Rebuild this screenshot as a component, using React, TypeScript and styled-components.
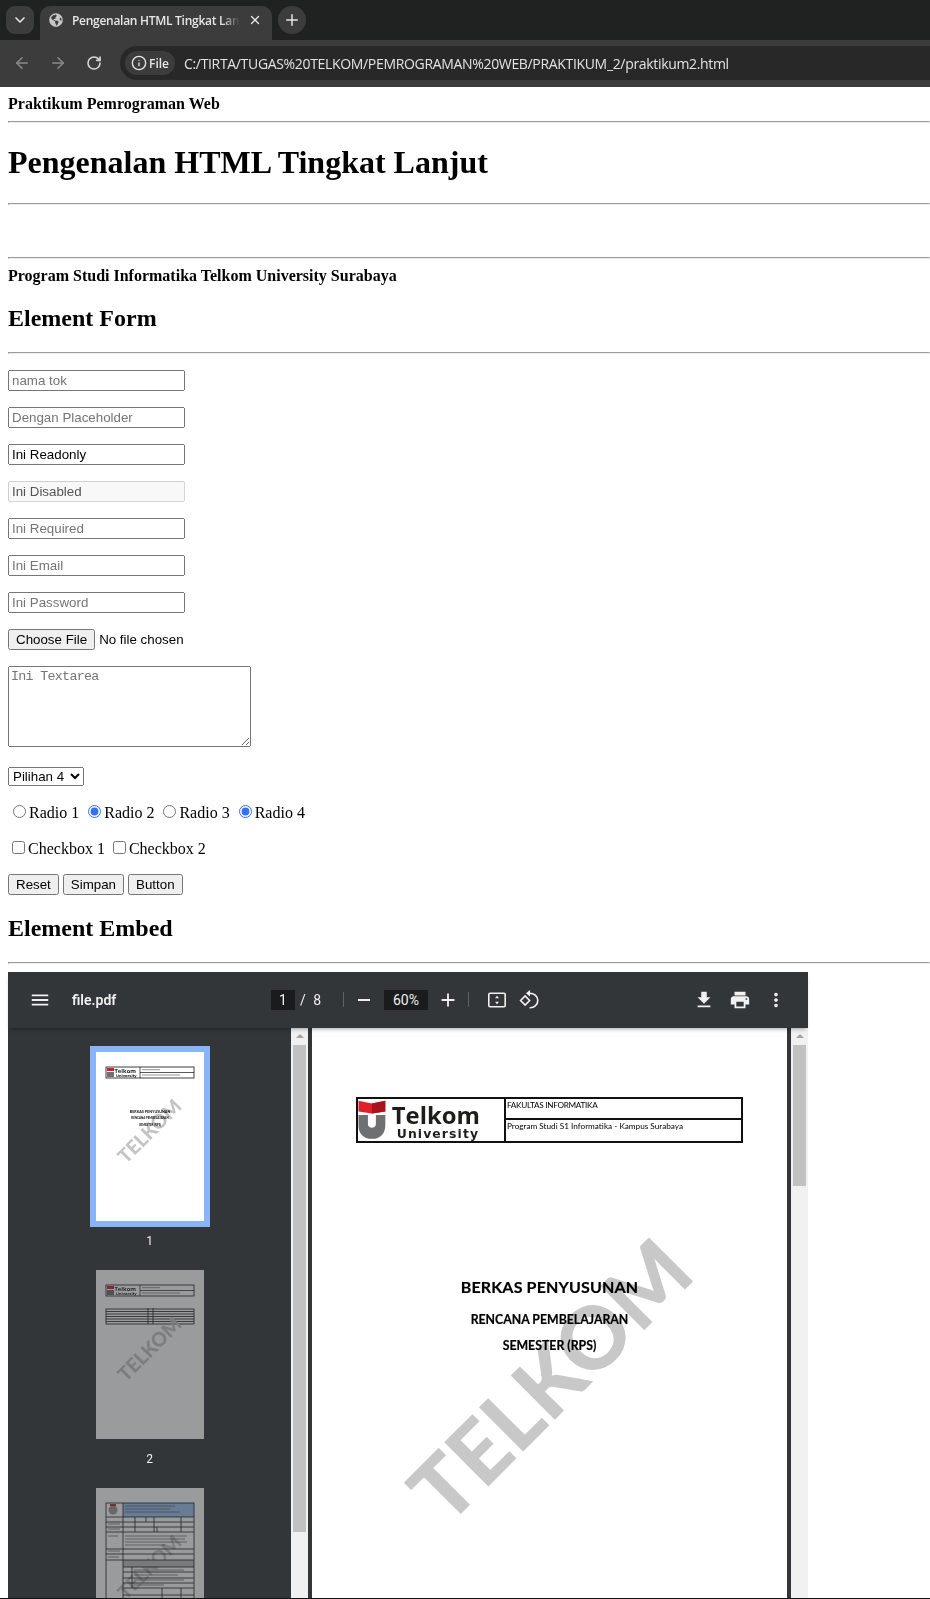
import React from 'react'
import styled, { createGlobalStyle } from 'styled-components'
import { ArrowLeft, ArrowRight, ChevronDown, Info, Plus, RotateCw, X } from 'lucide-react'
import { FaGlobeAmericas } from 'react-icons/fa'

const GlobalStyle = createGlobalStyle`
  html, body {
    margin: 0;
    padding: 0;
    background: #fff;
  }
  body {
    font-family: "Liberation Serif", serif;
    font-size: 16px;
    color: #000;
  }
`

const Screen = styled.div`
  width: 930px;
  height: 1599px;
  overflow: hidden;
  display: flex;
  flex-direction: column;
  border-bottom: 1px solid #111;
  box-sizing: border-box;
`

/* browser frame */
const TabStrip = styled.div`
  height: 40px;
  flex: none;
  background: #202222;
  display: flex;
  align-items: flex-start;
  padding: 6px 0 0 6px;
  box-sizing: border-box;
  font-family: "Open Sans", sans-serif;
`

const RoundButton = styled.div`
  width: 28px;
  height: 28px;
  border-radius: 9px;
  background: #3c3c3c;
  color: #e3e3e3;
  display: flex;
  align-items: center;
  justify-content: center;
  flex: none;
`

const PlusButton = styled(RoundButton)`
  border-radius: 50%;
  margin-left: 6px;
`

const Tab = styled.div`
  width: 232px;
  height: 34px;
  margin-left: 6px;
  background: #3c3c3c;
  border-radius: 10px 10px 0 0;
  display: flex;
  align-items: center;
  padding: 0 10px 6px 9px;
  box-sizing: border-box;
  color: #e6e6e6;
`

const TabTitle = styled.div`
  width: 170px;
  margin-left: 9px;
  font-size: 12px;
  font-weight: 600;
  letter-spacing: -0.28px;
  white-space: nowrap;
  overflow: hidden;
  mask-image: linear-gradient(to right, #000 150px, transparent 168px);
`

const TabClose = styled.div`
  margin-left: auto;
  display: flex;
`

const Toolbar = styled.div`
  height: 47px;
  flex: none;
  background: #3c3c3c;
  display: flex;
  padding: 6px 0 7px;
  box-sizing: border-box;
`

const NavButton = styled.div<{ $dim?: boolean }>`
  width: 36px;
  display: flex;
  align-items: center;
  justify-content: center;
  color: ${({ $dim }) => ($dim ? '#8a8a8a' : '#d8d8d8')};
`

const NavGroup = styled.div`
  display: flex;
  padding-left: 4px;
  width: 120px;
  box-sizing: border-box;
`

const Omnibox = styled.div`
  flex: 1;
  background: #282828;
  border-radius: 17px 0 0 17px;
  display: flex;
  align-items: center;
  padding-left: 5px;
  font-family: "Open Sans", sans-serif;
`

const FileChip = styled.div`
  width: 50px;
  height: 24px;
  background: #3c3c3c;
  border-radius: 12px;
  display: flex;
  align-items: center;
  gap: 2px;
  padding-left: 6px;
  box-sizing: border-box;
  color: #e6e6e6;
  font-size: 12px;
  font-weight: 600;
`

const UrlText = styled.div`
  margin-left: 9px;
  color: #e3e3e3;
  font-size: 14px;
  letter-spacing: -0.33px;
  white-space: nowrap;
`

/* page body */
const Main = styled.main`
  padding: 8px 0 0 8px;
  flex: 1;
`

const Rule = styled.hr`
  margin: 8px 0;
`

const LabTitle = styled.h1`
  font-size: 32px;
  margin: 21.44px 0;
`

const SectionTitle = styled.h2`
  font-size: 24px;
  margin: 19.92px 0;
`

const Spacer = styled.div`
  height: 36px;
`

const Field = styled.p`
  margin: 16px 0;
`

const TextInput = styled.input`
  width: 177px;
  box-sizing: border-box;
  height: 21px;
  font: 13.33px "Liberation Sans", sans-serif;
`

const FileInput = styled.input`
  font: 13.33px "Liberation Sans", sans-serif;
`

const Notes = styled.textarea`
  width: 243px;
  height: 81px;
  box-sizing: border-box;
  font: 13.33px "Liberation Mono", monospace;
  letter-spacing: -0.7px;
`

const Picker = styled.select`
  width: 76px;
  font: 13.33px "Liberation Sans", sans-serif;
`

const Choice = styled.input`
  accent-color: #3370ff;
`

const ActionButton = styled.button`
  font: 13.33px "Liberation Sans", sans-serif;
`

/* pdf viewer */
const PdfFrame = styled.div`
  width: 800px;
  height: 700px;
  background: #323639;
  display: flex;
  flex-direction: column;
`

const PdfToolbar = styled.div`
  height: 56px;
  flex: none;
  background: #323639;
  box-shadow: 0 3px 4px -2px rgba(0, 0, 0, 0.35);
  position: relative;
  z-index: 2;
  display: grid;
  grid-template-columns: 263px 1fr auto;
  align-items: center;
  color: #f1f1f1;
  font-family: Roboto, sans-serif;
`

const PdfTitleGroup = styled.div`
  display: flex;
  align-items: center;
  padding-left: 21px;
  gap: 21px;
`

const FileName = styled.div`
  font-size: 14px;
  font-weight: 600;
`

const PdfControls = styled.div`
  display: flex;
  align-items: center;
`

const PageBox = styled.div`
  width: 24px;
  height: 20px;
  background: #191b1c;
  font-size: 14px;
  text-align: center;
  line-height: 20px;
`

const PageCount = styled.div`
  font-size: 14px;
  margin-left: 5px;
  width: 43px;
  word-spacing: 4px;
`

const ZoomBox = styled(PageBox)`
  width: 44px;
  margin-left: 8px;
`

const ToolDivider = styled.div`
  width: 1px;
  height: 15px;
  background: #5f6265;
`

const ToolIcon = styled.span<{ $left: number }>`
  display: flex;
  margin-left: ${({ $left }) => $left}px;
`

const PdfRight = styled.div`
  display: flex;
  align-items: center;
  gap: 14px;
  padding-right: 21px;
`

const PdfBody = styled.div`
  flex: 1;
  display: flex;
  min-height: 0;
`

const ThumbPane = styled.div`
  width: 283px;
  flex: none;
  display: flex;
  flex-direction: column;
  align-items: center;
  padding-top: 18px;
  box-sizing: border-box;
`

const ThumbItem = styled.div`
  display: flex;
  flex-direction: column;
  align-items: center;
`

const ThumbFrame = styled.div<{ $active?: boolean }>`
  width: 108px;
  height: 169px;
  border: 6px solid ${({ $active }) => ($active ? '#8ab4f8' : 'transparent')};
  flex: none;
  svg {
    display: block;
    opacity: ${({ $active }) => ($active ? 1 : 0.5)};
    filter: blur(0.3px);
  }
`

const ThumbLabel = styled.div`
  color: #f1f1f1;
  font: 12px Roboto, sans-serif;
  height: 37px;
  line-height: 14px;
  padding-top: 7px;
  box-sizing: border-box;
`

const ScrollTrack = styled.div`
  width: 17px;
  flex: none;
  background: #f1f1f1;
  display: flex;
  flex-direction: column;
  align-items: center;
`

const ScrollArrow = styled.div`
  height: 17px;
  flex: none;
  width: 100%;
  display: flex;
  align-items: center;
  justify-content: center;
  &::before {
    content: '';
    border-left: 4px solid transparent;
    border-right: 4px solid transparent;
    border-bottom: 4px solid #a3a3a3;
  }
`

const ScrollThumb = styled.div<{ $height: number }>`
  width: 13px;
  height: ${({ $height }) => $height}px;
  background: #c1c1c1;
`

const PageArea = styled.div`
  flex: 1;
  padding: 0 4px;
  min-width: 0;
`

const Sheet = styled.div`
  height: 100%;
  background: #fff;
  position: relative;
  overflow: hidden;
  display: flex;
  flex-direction: column;
  align-items: center;
  padding-top: 69px;
  box-sizing: border-box;
  font-family: Lato, sans-serif;
  color: #000;
`

const DocHeader = styled.div`
  width: 387px;
  height: 46px;
  box-sizing: border-box;
  border: 2px solid #111;
  display: grid;
  grid-template-columns: 148px 1fr;
  grid-template-rows: 1fr 1fr;
  flex: none;
`

const LogoCell = styled.div`
  grid-row: 1 / 3;
  border-right: 2px solid #111;
  display: flex;
`

const HeaderCell = styled.div<{ $top?: boolean }>`
  font-size: 8.2px;
  padding: 1px 0 0 1px;
  letter-spacing: ${({ $top }) => ($top ? '-0.3px' : '0')};
  border-bottom: ${({ $top }) => ($top ? '2px solid #111' : 'none')};
  white-space: nowrap;
`

const DocTitle = styled.div`
  margin-top: 134px;
  font-size: 16px;
  font-weight: 700;
  line-height: 20px;
  letter-spacing: 0.15px;
  -webkit-text-stroke: 0.2px #000;
`

const DocSubtitle = styled.div<{ $gap: number }>`
  margin-top: ${({ $gap }) => $gap}px;
  font-size: 12.3px;
  font-weight: 700;
  line-height: 16px;
  -webkit-text-stroke: 0.2px #000;
`

const Watermark = styled.div`
  position: absolute;
  left: 237px;
  top: 351px;
  transform: translate(-50%, -50%) rotate(-45deg);
  font-size: 86px;
  font-weight: 900;
  color: #c8c8c8;
  line-height: 1;
  mix-blend-mode: multiply;
  white-space: nowrap;
`

const Hamburger = () => (
  <svg width="22" height="22" viewBox="0 0 24 24" fill="currentColor">
    <path d="M3 18h18v-2H3v2zm0-5h18v-2H3v2zm0-7v2h18V6H3z" />
  </svg>
)

const Minus = () => (
  <svg width="24" height="24" viewBox="0 0 24 24" fill="currentColor">
    <path d="M6 11h12v2H6z" />
  </svg>
)

const PlusIcon = () => (
  <svg width="22" height="22" viewBox="0 0 24 24" fill="currentColor">
    <path d="M19 13h-6v6h-2v-6H5v-2h6V5h2v6h6v2z" />
  </svg>
)

const FitIcon = () => (
  <svg width="24" height="24" viewBox="0 0 24 24" fill="none">
    <rect x="3.800" y="5.300" width="16.400" height="13.400" rx="1.200" stroke="currentColor" strokeWidth="1.600" />
    <path d="M12 7.800l2 2.400h-4zM12 16.200l2-2.400h-4z" fill="currentColor" />
  </svg>
)

const RotateIcon = () => (
  <svg width="24" height="24" viewBox="0 0 24 24" fill="none">
    <path d="M3.600 12.500l4.500-4.500 4.500 4.500-4.500 4.500z" stroke="currentColor" strokeWidth="1.600" />
    <path d="M12 5.200c5-.3 8.800 3.200 8.800 7.300 0 4.200-3.800 7.600-8.200 7.200" stroke="currentColor" strokeWidth="1.600" />
    <path d="M13 2v6.400L9 5.200z" fill="currentColor" />
  </svg>
)

const DownloadIcon = () => (
  <svg width="22" height="22" viewBox="0 0 24 24" fill="currentColor">
    <path d="M19 9h-4V3H9v6H5l7 7 7-7zM5 18v2h14v-2H5z" />
  </svg>
)

const PrintIcon = () => (
  <svg width="22" height="22" viewBox="0 0 24 24" fill="currentColor">
    <path d="M19 8H5c-1.660 0-3 1.340-3 3v6h4v4h12v-4h4v-6c0-1.660-1.340-3-3-3zm-3 11H8v-5h8v5zm3-7c-.55 0-1-.45-1-1s.45-1 1-1 1 .45 1 1-.45 1-1 1zm-1-9H6v4h12V3z" />
  </svg>
)

const MoreIcon = () => (
  <svg width="22" height="22" viewBox="0 0 24 24" fill="currentColor">
    <path d="M12 8c1.100 0 2-.9 2-2s-.9-2-2-2-2 .9-2 2 .9 2 2 2zm0 2c-1.100 0-2 .9-2 2s.9 2 2 2 2-.9 2-2-.9-2-2-2zm0 6c-1.100 0-2 .9-2 2s.9 2 2 2 2-.9 2-2-.9-2-2-2z" />
  </svg>
)

const TelkomLogo = () => (
  <svg width="147" height="42" viewBox="0 0 147 42">
    <path d="M0.500 1.500l13.500 3 13.500-3v11l-13.500 2-13.500-2z" fill="#e0202a" />
    <path d="M14 4.500l13.500-3v11l-13.500 2z" fill="#a8141c" />
    <path d="M0.500 16h9.500v9c0 5 8 5 8 0v-9h9.500v10c0 9-5 14-13.500 14S0.500 35 0.500 26z" fill="#6f7072" />
    <text x="34" y="25" fontFamily="'Open Sans', sans-serif" fontWeight="700" fontSize="24" fill="#1d1d1b">Telkom</text>
    <text x="39" y="39" fontFamily="'DejaVu Sans', sans-serif" fontWeight="700" fontSize="12.500" letterSpacing="1.100" fill="#1d1d1b">University</text>
  </svg>
)

const ThumbHeader = ({ y }: { y: number }) => (
  <g>
    <rect x="10" y={y} width="88" height="11" fill="none" stroke="#111" strokeWidth="0.800" />
    <path d={`M44 ${y}v11M44 ${y + 5.5}h54`} stroke="#111" strokeWidth="0.700" />
    <path d={`M11 ${y + 1}h7v3h-7z`} fill="#d0202a" />
    <path d={`M11 ${y + 5}h7v5h-7z`} fill="#6f7072" />
    <text x="18.500" y={y + 5.5} fontSize="5.800" fontWeight="700" fontFamily="'Open Sans', sans-serif" fill="#222">Telkom</text>
    <text x="20" y={y + 9.8} fontSize="3.600" fontWeight="700" fontFamily="'DejaVu Sans', sans-serif" fill="#222">University</text>
    <path d={`M46 ${y + 2.7}h18M46 ${y + 8}h38`} stroke="#666" strokeWidth="0.700" />
  </g>
)

const ThumbMark = () => (
  <text
    x="53.500"
    y="86"
    textAnchor="middle"
    fontSize="19.500"
    fontWeight="900"
    fontFamily="Lato, sans-serif"
    fill="#c4c4c4"
    transform="rotate(-45 53.500 79)"
  >
    TELKOM
  </text>
)

const FirstThumb = () => (
  <svg width="108" height="169" viewBox="0 0 108 169">
    <rect width="108" height="169" fill="#fff" />
    <ThumbHeader y={15} />
    <ThumbMark />
    <g fontFamily="Lato, sans-serif" fontWeight="900" textAnchor="middle" fill="#222">
      <text x="54" y="60.500" fontSize="3.700">BERKAS PENYUSUNAN</text>
      <text x="54" y="67" fontSize="2.900">RENCANA PEMBELAJARAN</text>
      <text x="54" y="73.500" fontSize="2.900">SEMESTER (RPS)</text>
    </g>
  </svg>
)

const SecondThumb = () => (
  <svg width="108" height="169" viewBox="0 0 108 169">
    <rect width="108" height="169" fill="#fff" />
    <ThumbHeader y={15} />
    <g stroke="#111" fill="none" strokeWidth="0.800">
      <rect x="10" y="39" width="88" height="15" />
      <path d="M52 38v16M57 38v16M10 41.500h88M10 44h88M10 46.500h88M10 49h88M10 51.500h88" />
    </g>
    <ThumbMark />
  </svg>
)

const ThirdThumb = () => (
  <svg width="108" height="169" viewBox="0 0 108 169">
    <rect width="108" height="169" fill="#fff" />
    <rect x="27" y="15" width="71" height="14" fill="#9dc3f0" />
    <ThumbMark />
    <rect x="27" y="72" width="71" height="7" fill="#bdbdbd" />
    <circle cx="17" cy="22" r="4.500" fill="#999" />
    <path d="M14 16h6v2h-6z" fill="#c22" />
    <g stroke="#111" fill="none" strokeWidth="0.800">
      <rect x="10" y="15" width="88" height="120" />
      <path d="M27 15v120M10 29h88M10 34h88M10 39h88M10 44h88M10 61h88M10 66h88M10 72h88M27 79h71M27 84h71M27 90h71M27 95h71M27 100h71M27 107h71" />
      <path d="M39 29v15M50 29v5M58 29v15M61 39v5M85 29v15M36 79v21M66 100v10M85 100v10" />
    </g>
    <g stroke="#555" strokeWidth="0.700">
      <path d="M29 18h50M29 21h45M29 24h55M29 48h62M29 51h60M29 54h62M29 57h40M12 48h10M12 36h12M12 41h12M12 63h12M12 69h11M38 82h50M38 87h44M38 92h50M38 97h30" />
    </g>
  </svg>
)

export default function App() {
  return (
    <Screen>
      <GlobalStyle />
      <TabStrip>
        <RoundButton>
          <ChevronDown size={16} strokeWidth={2.5} />
        </RoundButton>
        <Tab>
          <FaGlobeAmericas size={14} color="#c7c7c7" />
          <TabTitle>Pengenalan HTML Tingkat Lanjut</TabTitle>
          <TabClose>
            <X size={14} strokeWidth={2.2} />
          </TabClose>
        </Tab>
        <PlusButton>
          <Plus size={18} strokeWidth={2} />
        </PlusButton>
      </TabStrip>
      <Toolbar>
        <NavGroup>
          <NavButton $dim>
            <ArrowLeft size={18} />
          </NavButton>
          <NavButton $dim>
            <ArrowRight size={18} />
          </NavButton>
          <NavButton>
            <RotateCw size={16} strokeWidth={2.4} />
          </NavButton>
        </NavGroup>
        <Omnibox>
          <FileChip>
            <Info size={16} />
            File
          </FileChip>
          <UrlText>C:/TIRTA/TUGAS%20TELKOM/PEMROGRAMAN%20WEB/PRAKTIKUM_2/praktikum2.html</UrlText>
        </Omnibox>
      </Toolbar>

      <Main>
        <b>Praktikum Pemrograman Web</b>
        <Rule />
        <LabTitle>Pengenalan HTML Tingkat Lanjut</LabTitle>
        <Rule />
        <Spacer />
        <Rule />
        <b>Program Studi Informatika Telkom University Surabaya</b>
        <SectionTitle>Element Form</SectionTitle>
        <Rule />
        <form>
          <Field>
            <TextInput type="text" placeholder="nama tok" />
          </Field>
          <Field>
            <TextInput type="text" placeholder="Dengan Placeholder" />
          </Field>
          <Field>
            <TextInput type="text" defaultValue="Ini Readonly" readOnly />
          </Field>
          <Field>
            <TextInput type="text" defaultValue="Ini Disabled" disabled />
          </Field>
          <Field>
            <TextInput type="text" placeholder="Ini Required" />
          </Field>
          <Field>
            <TextInput type="email" placeholder="Ini Email" />
          </Field>
          <Field>
            <TextInput type="password" placeholder="Ini Password" />
          </Field>
          <Field>
            <FileInput type="file" />
          </Field>
          <Field>
            <Notes placeholder="Ini Textarea" />
          </Field>
          <Field>
            <Picker defaultValue="4">
              <option value="1">Pilihan 1</option>
              <option value="2">Pilihan 2</option>
              <option value="3">Pilihan 3</option>
              <option value="4">Pilihan 4</option>
            </Picker>
          </Field>
          <Field>
            <Choice type="radio" name="r1" />Radio 1 <Choice type="radio" name="r1" defaultChecked />Radio 2{' '}
            <Choice type="radio" name="r2" />Radio 3 <Choice type="radio" name="r2" defaultChecked />Radio 4
          </Field>
          <Field>
            <Choice type="checkbox" />Checkbox 1 <Choice type="checkbox" />Checkbox 2
          </Field>
          <ActionButton type="reset">Reset</ActionButton> <ActionButton type="submit">Simpan</ActionButton>{' '}
          <ActionButton type="button">Button</ActionButton>
        </form>
        <SectionTitle>Element Embed</SectionTitle>
        <Rule />
        <PdfFrame>
          <PdfToolbar>
            <PdfTitleGroup>
              <Hamburger />
              <FileName>file.pdf</FileName>
            </PdfTitleGroup>
            <PdfControls>
              <PageBox>1</PageBox>
              <PageCount>/ 8</PageCount>
              <ToolDivider />
              <ToolIcon $left={8}>
                <Minus />
              </ToolIcon>
              <ZoomBox>60%</ZoomBox>
              <ToolIcon $left={9}>
                <PlusIcon />
              </ToolIcon>
              <ToolIcon $left={9}>
                <ToolDivider />
              </ToolIcon>
              <ToolIcon $left={16}>
                <FitIcon />
              </ToolIcon>
              <ToolIcon $left={8}>
                <RotateIcon />
              </ToolIcon>
            </PdfControls>
            <PdfRight>
              <DownloadIcon />
              <PrintIcon />
              <MoreIcon />
            </PdfRight>
          </PdfToolbar>
          <PdfBody>
            <ThumbPane>
              <ThumbItem>
                <ThumbFrame $active>
                  <FirstThumb />
                </ThumbFrame>
                <ThumbLabel>1</ThumbLabel>
              </ThumbItem>
              <ThumbItem>
                <ThumbFrame>
                  <SecondThumb />
                </ThumbFrame>
                <ThumbLabel>2</ThumbLabel>
              </ThumbItem>
              <ThumbItem>
                <ThumbFrame>
                  <ThirdThumb />
                </ThumbFrame>
              </ThumbItem>
            </ThumbPane>
            <ScrollTrack>
              <ScrollArrow />
              <ScrollThumb $height={487} />
            </ScrollTrack>
            <PageArea>
              <Sheet>
                <DocHeader>
                  <LogoCell>
                    <TelkomLogo />
                  </LogoCell>
                  <HeaderCell $top>FAKULTAS INFORMATIKA</HeaderCell>
                  <HeaderCell>Program Studi S1 Informatika - Kampus Surabaya</HeaderCell>
                </DocHeader>
                <DocTitle>BERKAS PENYUSUNAN</DocTitle>
                <DocSubtitle $gap={15}>RENCANA PEMBELAJARAN</DocSubtitle>
                <DocSubtitle $gap={10}>SEMESTER (RPS)</DocSubtitle>
                <Watermark>TELKOM</Watermark>
              </Sheet>
            </PageArea>
            <ScrollTrack>
              <ScrollArrow />
              <ScrollThumb $height={141} />
            </ScrollTrack>
          </PdfBody>
        </PdfFrame>
      </Main>
    </Screen>
  )
}
